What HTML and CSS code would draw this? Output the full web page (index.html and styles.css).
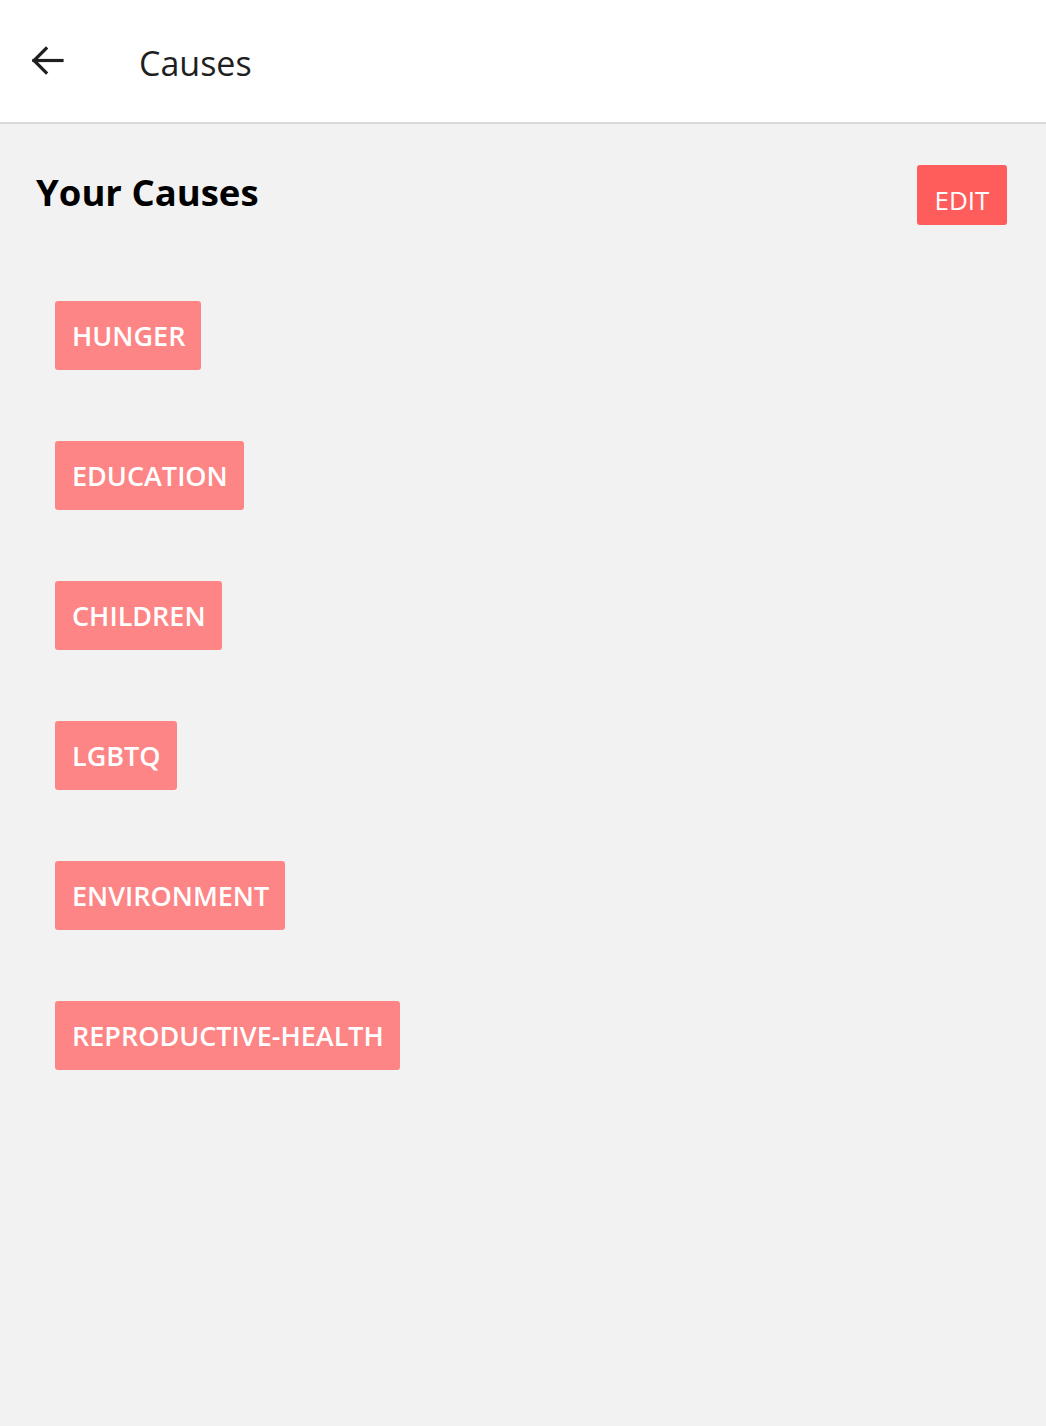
FILE: index.html
```html
<!DOCTYPE html>
<html>
<head>
<meta charset="utf-8">
<link rel="stylesheet" href="styles.css">
</head>
<body>
<header class="topbar">
  <svg class="back" width="34" height="34" viewBox="0 0 34 34" fill="none" stroke="#1f1f1f" stroke-width="3.2" stroke-linecap="square">
    <path d="M4 16.5 H32"/>
    <path d="M16 4.5 L4 16.5 L16 28.5"/>
  </svg>
  <h1 class="title">Causes</h1>
</header>
<main class="content">
  <div class="head-row">
    <h2 class="heading">Your Causes</h2>
    <button class="edit">EDIT</button>
  </div>
  <ul class="chips">
    <li class="chip">HUNGER</li>
    <li class="chip">EDUCATION</li>
    <li class="chip">CHILDREN</li>
    <li class="chip">LGBTQ</li>
    <li class="chip">ENVIRONMENT</li>
    <li class="chip">REPRODUCTIVE-HEALTH</li>
  </ul>
</main>
</body>
</html>
```
FILE: styles.css
```css
html, body {
  margin: 0;
  padding: 0;
}
body {
  background: #f2f2f2;
  font-family: "Open Sans", "Noto Sans", sans-serif;
  min-height: 1426px;
}
.topbar {
  background: #ffffff;
  border-bottom: 2px solid #dadada;
  display: flex;
  align-items: center;
  box-sizing: border-box;
  height: 124px;
  padding-left: 30px;
}
.back {
  display: block;
  margin-top: -1px;
}
.title {
  margin: 3px 0 0 75px;
  font-size: 34px;
  font-weight: 400;
  color: #1f1f1f;
}
.content {
  padding: 41px 39px 0 36px;
}
.head-row {
  display: flex;
  justify-content: space-between;
  align-items: flex-start;
}
.heading {
  margin: 6px 0 0 0;
  font-size: 36.5px;
  font-weight: 700;
  color: #000;
  line-height: 1.2;
}
.edit {
  width: 90px;
  height: 60px;
  border: none;
  border-radius: 3px;
  background: #ff5c5c;
  color: #fff;
  font-family: inherit;
  font-size: 26px;
  padding: 10px 0 0 0;
}
.chips {
  list-style: none;
  margin: 0;
  padding: 76px 0 0 19px;
  display: flex;
  flex-direction: column;
  align-items: flex-start;
  gap: 71px;
}
.chip {
  height: 69px;
  box-sizing: border-box;
  padding: 0 16px 0 17px;
  display: flex;
  align-items: center;
  background: #fd8585;
  color: #fff;
  border-radius: 3px;
  font-size: 27px;
  font-weight: 600;
}
```
